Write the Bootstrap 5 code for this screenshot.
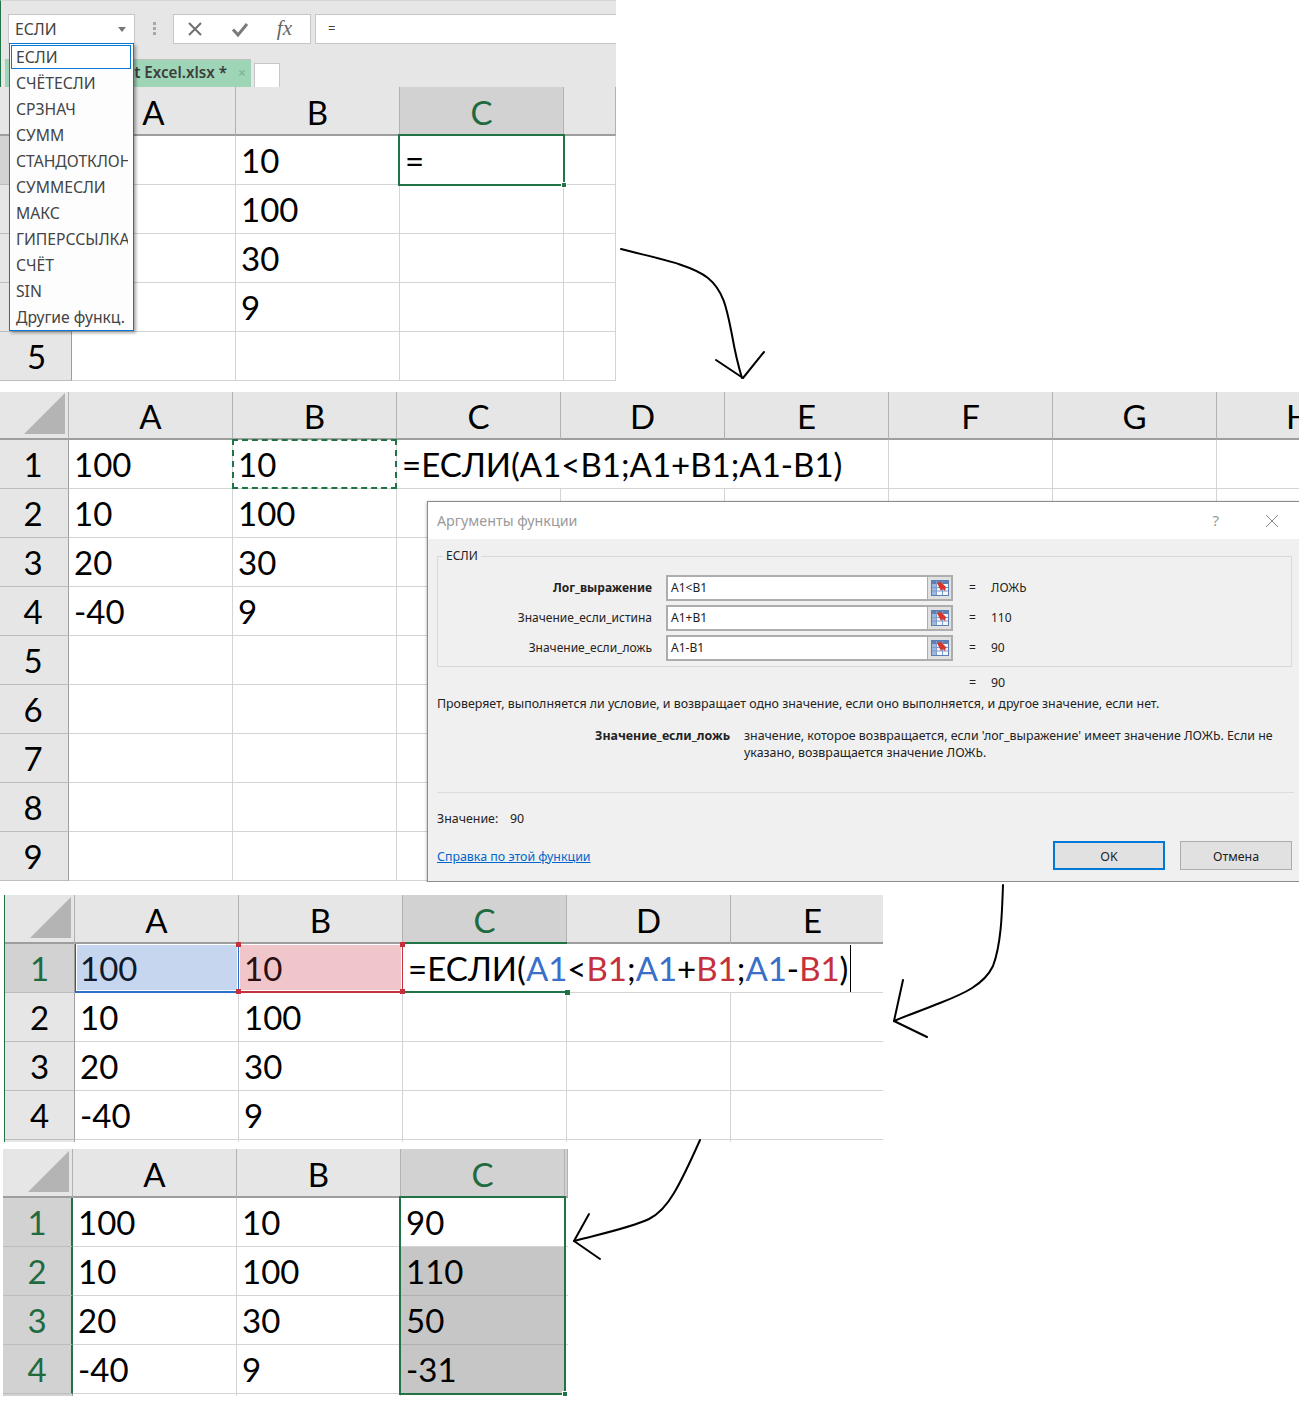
<!DOCTYPE html>
<html lang="ru">
<head>
<meta charset="utf-8">
<title>ЕСЛИ в Excel</title>
<link href="https://cdn.jsdelivr.net/npm/bootstrap@5.3.0/dist/css/bootstrap.min.css" rel="stylesheet">
<style>
html,body{margin:0;background:#fff;overflow-x:hidden}
.canvas{position:relative;width:1299px;height:1403px;overflow:hidden;font-family:"Lato","Noto Sans",sans-serif;color:#000}
.shot{position:relative;overflow:hidden}
.shot-1{width:616px;height:381px;margin-bottom:11px}
.shot-2{width:1299px;height:490px;margin-bottom:13px}
.shot-3{width:879px;height:247px;margin-left:4px;margin-bottom:7px;border-left:1px solid #217346}
.shot-4{width:565px;height:247px;margin-left:3px}
.xl{display:grid;grid-auto-rows:49px}
.xl-1{grid-template-columns:72px 164px 164px 164px 52px;grid-template-rows:49px}
.xl-2{grid-template-columns:69px repeat(8,164px);grid-template-rows:48px}
.xl-3{grid-template-columns:70px 164px 164px 164px 164px 164px;grid-template-rows:49px}
.xl-4{grid-template-columns:70px 164px 164px 164px 3px;grid-template-rows:49px}
.hc,.rh,.ce{position:relative;display:flex;align-items:center;font-size:33px;line-height:1;white-space:nowrap;min-width:0}
.hc{justify-content:center;background:#e6e6e6;border-right:1px solid #b2b2b2;border-bottom:2px solid #9e9e9e;padding-top:2px}
.xl-1 .hc,.xl-3 .hc,.xl-4 .hc{padding-top:4px}
.rh{justify-content:center;background:#e6e6e6;border-right:1px solid #9e9e9e;border-bottom:1px solid #bdbdbd;padding-right:2px}
.xl-1 .rh{padding-right:0;padding-left:2px}
.xl-3 .rh,.xl-4 .rh{padding-right:0}
.ce{padding-left:5px;border-right:1px solid #d4d4d4;border-bottom:1px solid #d4d4d4}
.corner{background:#e6e6e6;border-right:1px solid #b2b2b2;border-bottom:2px solid #9e9e9e;display:flex;align-items:flex-end;justify-content:flex-end;padding:0 3px 4px 0}
.corner i{display:block;width:41px;height:41px;background:#b4b4b4;clip-path:polygon(100% 0,100% 100%,0 100%)}
.hc.on,.rh.on{background:#d2d2d2;color:#1f6b3f}
.frame{position:absolute;left:-2px;top:-2px;right:-2px;bottom:-2px;border:2px solid #217346;z-index:2;pointer-events:none}
.frame::after{content:"";position:absolute;right:-4px;bottom:-4px;width:6px;height:6px;background:#217346;border:1px solid #fff}
.frame-col{bottom:-149px}
.frame-dash{position:absolute;left:-1px;top:-1px;right:-1px;bottom:-1px;border:2px dashed #217346;z-index:2;pointer-events:none}
.blue-cell{background:#c6d6ef;box-shadow:inset 0 0 0 1px #fff;border-bottom:2px solid #2e6fc9;border-right:1px solid #2e6fc9;border-left:1px solid #217346;padding:2px 0 0 4px;color:#0e1a2b}
.red-cell{background:#f0c6cb;box-shadow:inset 0 0 0 1px #fff;border-bottom:2px solid #c5303c;border-right:1px solid #c5303c;padding-top:2px;color:#2b0e12}
.ref-a{color:#3a6fc9}.ref-b{color:#c5303c}
.frame-c{position:absolute;left:0;top:-2px;width:164px;height:51px;border-top:2px solid #217346;border-bottom:2px solid #217346;z-index:2;pointer-events:none}
.frame-c::after{content:"";position:absolute;right:-3px;bottom:-4px;width:5px;height:5px;background:#217346}
.hdl{position:absolute;width:5px;height:5px;background:#c5303c;z-index:3}
.h-tl{left:-3px;top:-2px}.h-tr{right:-3px;top:-2px}.h-bl{left:-3px;bottom:-3px}.h-br{right:-3px;bottom:-3px}
.caret-bar{width:1px;height:47px;background:#000;margin-left:2px}
.formula-cell{grid-column:span 3;border-right:0}
.formula-wide{grid-column:span 3}
.grey{background:#c6c6c6;border-bottom-color:#b0b0b0}
.edge-green{border-right:2px solid #217346}
.top-bar{height:87px;background:#e6e6e6;border-top:1px solid #d6d6d6;border-left:1px solid #217346;font-family:"Noto Sans",sans-serif}
.tool-row{height:42px;padding:13px 0 0 7px}
.name-box{width:127px;height:30px;background:#fff;border:1px solid #c6c6c6;font-size:15.7px;color:#444;padding:2px 0 0 6px}
.drop-tri{width:0;height:0;border:4px solid transparent;border-top:5px solid #777;margin:3px 8px 0 auto}
.grip{width:3px;height:13px;margin:0 17px 0 18px;background:repeating-linear-gradient(#a8a8a8 0 3px,transparent 3px 5px)}
.fx-btns{width:138px;height:30px;background:#fff;border:1px solid #c6c6c6;padding:0 18px 0 12px}
.fx-label{font-family:"Liberation Serif",serif;font-style:italic;font-size:21px;color:#666}
.fx-input{flex:1;height:30px;margin-left:4px;background:#fff;border:1px solid #c6c6c6;border-right:0;font-size:13px;color:#444;padding-left:12px}
.tab-row{height:44px;padding:16px 0 0 4px}
.file-tab{width:246px;height:28px;background:#9fd5b7;border-top:1px solid #c0c0c0;font-size:15.2px;font-weight:600;color:#3d3d3d;padding:0 5px 2px 0}
.tab-x{color:#84b99a;font-size:14px;font-weight:700;margin-left:11px}
.tab-new{width:26px;height:24px;background:#fff;border:1px solid #c6c6c6;border-bottom:0;margin:4px 0 0 3px}
.name-list{position:absolute;left:9px;top:43px;width:125px;height:288px;background:#fdfdfd;border:1px solid #0a78d2;box-shadow:2px 2px 3px rgba(0,0,0,.35);padding:0 5px 0 0;font-family:"Noto Sans",sans-serif;font-size:15.7px;color:#444;z-index:5;overflow:hidden}
.name-item{height:26px;line-height:27px;padding-left:6px;white-space:nowrap;overflow:hidden}
.name-first{margin:1px -3px 1px 1px;height:24px;line-height:22px;padding-left:4px;border:1px solid #0a78d2;background:#fff}
.dlg{position:absolute;left:427px;top:109px;width:880px;height:381px;background:#f0f0f0;border:1px solid #8c8c8c;box-shadow:0 1px 3px rgba(0,0,0,.35);font-family:"Noto Sans",sans-serif;font-size:12.4px;color:#222;z-index:4}
.dlg-title{height:37px;background:#fff;padding:0 27px 0 9px;color:#9a9a9a;font-size:14.3px}
.dlg-help{margin-right:46px;font-size:15px;color:#999}
.dlg-set{margin:8px 0 0 9px;width:855px;height:120px;border:1px solid #d9d9d9;padding:0}
.dlg-set legend{float:none;width:auto;font-size:12px;margin:-7px 0 0 5px;padding:0 3px;line-height:18px;background:#f0f0f0}
.arg-rows{display:flex;flex-direction:column;gap:4px;margin-top:10px;font-size:12px}
.arg-label{width:214px;text-align:right}
.arg-input{width:287px;height:26px;margin-left:14px;border:2px solid #adadad;background:#fff;padding:0 0 0 3px}
.arg-pick{width:26px;height:26px;background:#e1e1e1;margin:-2px -2px -2px auto;border:2px solid #adadad;border-left-width:1px}
.arg-eq{margin-left:16px;width:22px}
.dlg-total{margin:7px 0 0 541px;height:17px;line-height:17px}
.dlg-total .arg-eq{margin:0}
.dlg-text{margin:4px 0 0 9px;height:17px;line-height:17px;white-space:nowrap}
.help-row{margin:15px 0 0 9px;line-height:17px}
.help-name{width:293px;text-align:right;font-weight:700;flex:none}
.help-body{margin-left:14px;width:540px}
.dlg-sep{margin:31px 0 0 9px;width:857px;height:1px;background:#dcdcdc}
.dlg-val{margin:17px 0 0 9px;line-height:17px}
.val-name{width:73px}
.dlg-foot{margin:14px 0 0 9px;width:855px}
.dlg-foot a{color:#0066cc;margin-top:3px}
.dlg-btn{width:112px;height:29px;padding:3px 0 0;font-size:12.4px;color:#222;background:#e1e1e1;border:1px solid #adadad;border-radius:0;margin-left:15px}
.dlg-ok{border:2px solid #0078d7}
.pen{position:absolute;left:0;top:0;z-index:8;pointer-events:none}
.sprite{position:absolute;width:0;height:0}
</style>
</head>
<body>
<svg class="sprite" aria-hidden="true"><symbol id="pick" viewBox="0 0 18 16"><rect x=".5" y=".5" width="17" height="15" fill="#f4f7fc" stroke="#5b7fb5"/><rect x="1" y="1" width="16" height="3" fill="#5f7fae"/><rect x="1" y="4" width="4" height="11" fill="#9db7dd"/><path d="M1 7.500H17M1 11H17M5.500 1V15M11.500 1V15" stroke="#7e9cc9" fill="none"/><path d="M6 3 10 2 15 7 14 11 11.500 9 10 11Z" fill="#d8362a"/></symbol></svg>
<div class="canvas">

<section class="shot shot-1">
  <div class="top-bar">
    <div class="tool-row d-flex">
      <div class="name-box d-flex align-items-center">ЕСЛИ<span class="drop-tri"></span></div>
      <div class="align-self-center grip"></div>
      <div class="fx-btns d-flex align-items-center justify-content-between">
        <svg width="18" height="18" viewBox="0 0 18 18"><path d="M3 3 15 15M15 3 3 15" stroke="#6f6f6f" stroke-width="2" fill="none"/></svg>
        <svg width="18" height="18" viewBox="0 0 18 18"><path d="M2 9.500 7 15 16 4" stroke="#7a7a7a" stroke-width="3" fill="none"/></svg>
        <span class="fx-label">fx</span>
      </div>
      <div class="fx-input d-flex align-items-center">=</div>
    </div>
    <div class="tab-row d-flex">
      <div class="file-tab d-flex align-items-center justify-content-end">t Excel.xlsx *<span class="tab-x">×</span></div>
      <div class="tab-new"></div>
    </div>
  </div>
  <div class="xl xl-1">
    <div class="corner"></div><div class="hc">A</div><div class="hc">B</div><div class="hc on">C</div><div class="hc"></div>
    <div class="rh on"></div><div class="ce"></div><div class="ce">10</div><div class="ce">=<span class="frame"></span></div><div class="ce"></div>
    <div class="rh"></div><div class="ce"></div><div class="ce">100</div><div class="ce"></div><div class="ce"></div>
    <div class="rh"></div><div class="ce"></div><div class="ce">30</div><div class="ce"></div><div class="ce"></div>
    <div class="rh"></div><div class="ce"></div><div class="ce">9</div><div class="ce"></div><div class="ce"></div>
    <div class="rh">5</div><div class="ce"></div><div class="ce"></div><div class="ce"></div><div class="ce"></div>
  </div>
  <div class="name-list">
    <div class="name-item name-first">ЕСЛИ</div>
    <div class="name-item">СЧЁТЕСЛИ</div>
    <div class="name-item">СРЗНАЧ</div>
    <div class="name-item">СУММ</div>
    <div class="name-item">СТАНДОТКЛОН</div>
    <div class="name-item">СУММЕСЛИ</div>
    <div class="name-item">МАКС</div>
    <div class="name-item">ГИПЕРССЫЛКА</div>
    <div class="name-item">СЧЁТ</div>
    <div class="name-item">SIN</div>
    <div class="name-item">Другие функц.</div>
  </div>
</section>

<section class="shot shot-2">
  <div class="xl xl-2">
    <div class="corner"><i></i></div><div class="hc">A</div><div class="hc">B</div><div class="hc">C</div><div class="hc">D</div><div class="hc">E</div><div class="hc">F</div><div class="hc">G</div><div class="hc">H</div>
    <div class="rh">1</div><div class="ce">100</div><div class="ce">10<span class="frame-dash"></span></div><div class="ce formula-wide">=ЕСЛИ(A1&lt;B1;A1+B1;A1-B1)</div><div class="ce"></div><div class="ce"></div><div class="ce"></div>
    <div class="rh">2</div><div class="ce">10</div><div class="ce">100</div><div class="ce"></div><div class="ce"></div><div class="ce"></div><div class="ce"></div><div class="ce"></div><div class="ce"></div>
    <div class="rh">3</div><div class="ce">20</div><div class="ce">30</div><div class="ce"></div><div class="ce"></div><div class="ce"></div><div class="ce"></div><div class="ce"></div><div class="ce"></div>
    <div class="rh">4</div><div class="ce">-40</div><div class="ce">9</div><div class="ce"></div><div class="ce"></div><div class="ce"></div><div class="ce"></div><div class="ce"></div><div class="ce"></div>
    <div class="rh">5</div><div class="ce"></div><div class="ce"></div><div class="ce"></div><div class="ce"></div><div class="ce"></div><div class="ce"></div><div class="ce"></div><div class="ce"></div>
    <div class="rh">6</div><div class="ce"></div><div class="ce"></div><div class="ce"></div><div class="ce"></div><div class="ce"></div><div class="ce"></div><div class="ce"></div><div class="ce"></div>
    <div class="rh">7</div><div class="ce"></div><div class="ce"></div><div class="ce"></div><div class="ce"></div><div class="ce"></div><div class="ce"></div><div class="ce"></div><div class="ce"></div>
    <div class="rh">8</div><div class="ce"></div><div class="ce"></div><div class="ce"></div><div class="ce"></div><div class="ce"></div><div class="ce"></div><div class="ce"></div><div class="ce"></div>
    <div class="rh">9</div><div class="ce"></div><div class="ce"></div><div class="ce"></div><div class="ce"></div><div class="ce"></div><div class="ce"></div><div class="ce"></div><div class="ce"></div>
  </div>

  <div class="dlg">
    <div class="dlg-title d-flex align-items-center">
      <span>Аргументы функции</span>
      <span class="dlg-help ms-auto">?</span>
      <svg width="14" height="14" viewBox="0 0 14 14"><path d="M1 1 13 13M13 1 1 13" stroke="#888" stroke-width="1" fill="none"/></svg>
    </div>
    <fieldset class="dlg-set">
      <legend>ЕСЛИ</legend>
      <div class="arg-rows">
        <div class="d-flex align-items-center"><div class="arg-label fw-bold">Лог_выражение</div><div class="arg-input d-flex align-items-center">A1&lt;B1<span class="arg-pick d-flex align-items-center justify-content-center"><svg width="18" height="16"><use href="#pick"/></svg></span></div><div class="arg-eq">=</div><div>ЛОЖЬ</div></div>
        <div class="d-flex align-items-center"><div class="arg-label">Значение_если_истина</div><div class="arg-input d-flex align-items-center">A1+B1<span class="arg-pick d-flex align-items-center justify-content-center"><svg width="18" height="16"><use href="#pick"/></svg></span></div><div class="arg-eq">=</div><div>110</div></div>
        <div class="d-flex align-items-center"><div class="arg-label">Значение_если_ложь</div><div class="arg-input d-flex align-items-center">A1-B1<span class="arg-pick d-flex align-items-center justify-content-center"><svg width="18" height="16"><use href="#pick"/></svg></span></div><div class="arg-eq">=</div><div>90</div></div>
      </div>
    </fieldset>
    <div class="dlg-total d-flex"><span class="arg-eq">=</span><span>90</span></div>
    <div class="dlg-text">Проверяет, выполняется ли условие, и возвращает одно значение, если оно выполняется, и другое значение, если нет.</div>
    <div class="help-row d-flex">
      <div class="help-name">Значение_если_ложь</div>
      <div class="help-body">значение, которое возвращается, если 'лог_выражение' имеет значение ЛОЖЬ. Если не указано, возвращается значение ЛОЖЬ.</div>
    </div>
    <div class="dlg-sep"></div>
    <div class="dlg-val d-flex"><span class="val-name">Значение:</span><span>90</span></div>
    <div class="dlg-foot d-flex align-items-center">
      <a href="#">Справка по этой функции</a>
      <button type="button" class="btn dlg-btn dlg-ok ms-auto">OK</button>
      <button type="button" class="btn dlg-btn">Отмена</button>
    </div>
  </div>
</section>

<section class="shot shot-3">
  <div class="xl xl-3">
    <div class="corner"><i></i></div><div class="hc">A</div><div class="hc">B</div><div class="hc on">C</div><div class="hc">D</div><div class="hc">E</div>
    <div class="rh on">1</div><div class="ce blue-cell">100</div><div class="ce red-cell">10<span class="hdl h-tl"></span><span class="hdl h-tr"></span><span class="hdl h-bl"></span><span class="hdl h-br"></span></div>
    <div class="ce formula-cell">=ЕСЛИ(<span class="ref-a">A1</span>&lt;<span class="ref-b">B1</span>;<span class="ref-a">A1</span>+<span class="ref-b">B1</span>;<span class="ref-a">A1</span>-<span class="ref-b">B1</span>)<span class="caret-bar"></span><span class="frame-c"></span></div>
    <div class="rh">2</div><div class="ce">10</div><div class="ce">100</div><div class="ce"></div><div class="ce"></div><div class="ce"></div>
    <div class="rh">3</div><div class="ce">20</div><div class="ce">30</div><div class="ce"></div><div class="ce"></div><div class="ce"></div>
    <div class="rh">4</div><div class="ce">-40</div><div class="ce">9</div><div class="ce"></div><div class="ce"></div><div class="ce"></div>
    <div class="rh"></div><div class="ce"></div><div class="ce"></div><div class="ce"></div><div class="ce"></div><div class="ce"></div>
  </div>
</section>

<section class="shot shot-4">
  <div class="xl xl-4">
    <div class="corner"><i></i></div><div class="hc">A</div><div class="hc">B</div><div class="hc on">C</div><div class="hc on"></div>
    <div class="rh on edge-green">1</div><div class="ce">100</div><div class="ce">10</div><div class="ce">90<span class="frame frame-col"></span></div><div class="ce"></div>
    <div class="rh on edge-green">2</div><div class="ce">10</div><div class="ce">100</div><div class="ce grey">110</div><div class="ce"></div>
    <div class="rh on edge-green">3</div><div class="ce">20</div><div class="ce">30</div><div class="ce grey">50</div><div class="ce"></div>
    <div class="rh on edge-green">4</div><div class="ce">-40</div><div class="ce">9</div><div class="ce grey">-31</div><div class="ce"></div>
    <div class="rh on"></div><div class="ce"></div><div class="ce"></div><div class="ce"></div><div class="ce"></div>
  </div>
</section>

<svg class="pen" width="1299" height="1403" viewBox="0 0 1299 1403" fill="none" stroke="#000" stroke-width="2" stroke-linecap="round" stroke-linejoin="round">
  <path d="M621 249C655 258 690 264 708 278 724 291 727 310 732 335 735 352 738 365 742 378"/>
  <path d="M716 360 743 378 764 352"/>
  <path d="M1003 885C1002 915 1001 945 993 966 984 985 963 994 940 1003 925 1009 908 1015 894 1021"/>
  <path d="M903 980 894 1021 927 1037"/>
  <path d="M700 1140C692 1158 683 1178 674 1193 667 1205 659 1214 649 1219 630 1228 600 1234 574 1241"/>
  <path d="M589 1214 574 1241 600 1259"/>
</svg>
</div>
<script src="https://cdn.jsdelivr.net/npm/bootstrap@5.3.0/dist/js/bootstrap.bundle.min.js"></script>
</body>
</html>
